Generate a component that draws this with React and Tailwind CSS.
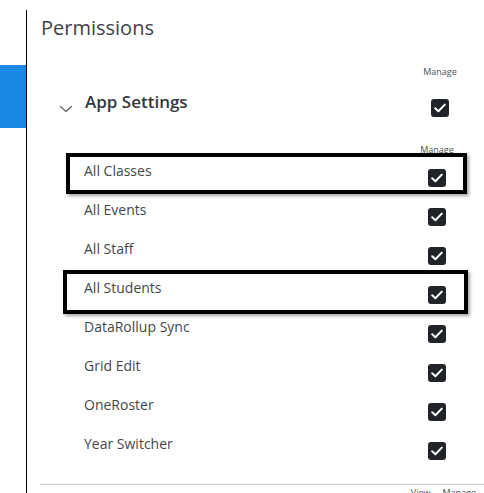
import React from "react";

const items = [
  { name: "All Classes", marked: true },
  { name: "All Events" },
  { name: "All Staff" },
  { name: "All Students", marked: true, wide: true },
  { name: "DataRollup Sync" },
  { name: "Grid Edit" },
  { name: "OneRoster" },
  { name: "Year Switcher" },
];

function Check() {
  return (
    <span className="flex h-[18px] w-[18px] shrink-0 items-center justify-center rounded-[3px] bg-[#202428]">
      <svg width="12" height="10" viewBox="0 0 12 10" fill="none">
        <path d="M1.2 5.2L4.4 8.2L10.8 1.6" stroke="#fff" strokeWidth="2" strokeLinecap="round" strokeLinejoin="round" />
      </svg>
    </span>
  );
}

export default function App() {
  return (
    <div className="flex h-[493px] w-[484px] overflow-hidden bg-white font-['Open_Sans',sans-serif]">
      {/* sidebar */}
      <aside className="mt-[10px] w-[27px] shrink-0 border-r border-black">
        <div className="mt-[55px] h-[63px] w-full bg-[#1c88e6]" />
      </aside>

      <main className="flex min-w-0 flex-1 flex-col">
        <h1 className="pl-[14px] pt-[14px] text-[20px] leading-[28px] text-[#3d4247]">Permissions</h1>

        <div className="mt-[24px] flex justify-end pr-[35px]">
          <div className="flex w-[18px] justify-center">
            <span className="whitespace-nowrap text-[9px] leading-[12px] text-[#4a4f54]">Manage</span>
          </div>
        </div>

        <div className="mt-[11px] flex items-start justify-between pl-[32px] pr-[35px]">
          <div className="flex items-start">
            <svg className="mt-[16px]" width="14" height="8" viewBox="0 0 14 8" fill="none">
              <path d="M1.5 1.5L7 6.5L12.5 1.5" stroke="#6b7076" strokeWidth="1.5" strokeLinecap="round" strokeLinejoin="round" />
            </svg>
            <span className="ml-[12px] pt-[1px] text-[17px] font-semibold leading-[24px] text-[#33383d]">App Settings</span>
          </div>
          <div className="mt-[10px]">
            <Check />
          </div>
        </div>

        <div className="mt-[27px] flex justify-end pr-[38px]">
          <div className="flex w-[18px] justify-center">
            <span className="whitespace-nowrap text-[9px] leading-[12px] text-[#4a4f54]">Manage</span>
          </div>
        </div>

        <ul className="mt-[4px]">
          {items.map((it) => (
            <li key={it.name} className="relative flex h-[39px] items-start justify-between pl-[57px] pr-[38px]">
              <span className="pt-[1px] text-[14px] leading-[20px] text-[#43484d]">{it.name}</span>
              <span className="mt-[9px]">
                <Check />
              </span>
              {it.marked && (
                <span
                  className={
                    it.wide
                      ? "pointer-events-none absolute left-[36px] top-[-7px] h-[44px] w-[405px] border-4 border-black shadow-[2px_2px_3px_rgba(0,0,0,0.35)]"
                      : "pointer-events-none absolute left-[39px] top-[-7px] h-[41px] w-[401px] border-4 border-black shadow-[2px_2px_3px_rgba(0,0,0,0.35)]"
                  }
                />
              )}
            </li>
          ))}
        </ul>

        <div className="ml-[13px] mt-[12px] border-t border-[#c6cdd1]" />
        <div className="mt-[2px] flex justify-end gap-[12px] pr-[8px] text-[9px] leading-[12px] text-[#4a4f54]">
          <span>View</span>
          <span>Manage</span>
        </div>
      </main>
    </div>
  );
}
